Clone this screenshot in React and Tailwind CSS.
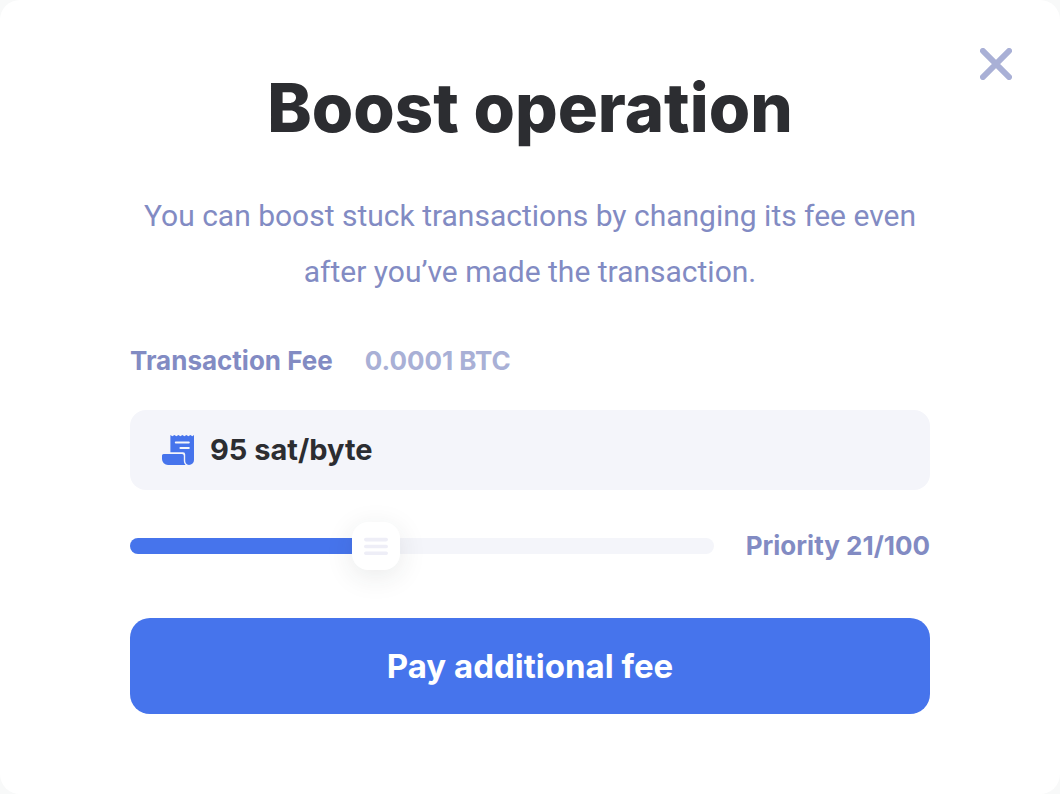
import React, { useState } from 'react';

const THUMB_SIZE = 48;

const CloseIcon = () => (
  <svg viewBox="0 0 32 32" className="size-8" fill="none" stroke="currentColor" strokeWidth="5.8" strokeLinecap="round">
    <path d="M2.9 2.9 29.1 29.1M29.1 2.9 2.9 29.1" />
  </svg>
);

const ReceiptIcon = () => (
  <svg viewBox="0 0 32 30" className="w-8" fill="currentColor">
    <path d="M8.4 0 10.4 1.3 12.4 0 14.4 1.3 16.4 0 18.4 1.3 20.4 0 22.4 1.3 24.4 0 26.4 1.3 28.4 0 30.4 1.3 32 0V25a5 5 0 0 1-5 5 4.6 4.6 0 0 1-3.8-4.8V19.5a2.2 2.2 0 0 0-2.2-2.2H8.4Z" />
    <path d="M0 20.6A1.6 1.6 0 0 1 1.6 19H20a1.8 1.8 0 0 1 1.8 1.8v4.4c0 2 .6 3.6 1.8 4.8H6a6 6 0 0 1-6-6Z" />
    <path d="M13.8 7.6H26.8M18.4 13H26.8" stroke="#f4f5fa" strokeWidth="2" strokeLinecap="round" />
  </svg>
);

const PrioritySlider = ({ value, onChange }) => {
  const offset = `calc((100% - ${THUMB_SIZE}px) * ${value / 100})`;

  return (
    <div className="relative flex h-12 flex-1 items-center">
      <div className="h-4 w-full overflow-hidden rounded-full bg-[#f4f5fa]">
        <div className="h-full bg-[#4674ec]" style={{ width: `calc(${offset} + ${THUMB_SIZE / 2}px)` }} />
      </div>
      <input
        id="priority"
        type="range"
        min="0"
        max="100"
        step="0.1"
        value={value}
        onChange={(e) => onChange(Number(e.target.value))}
        className="absolute inset-0 h-12 w-full cursor-pointer appearance-none bg-transparent [&::-webkit-slider-thumb]:size-12 [&::-webkit-slider-thumb]:appearance-none [&::-webkit-slider-thumb]:rounded-2xl [&::-webkit-slider-thumb]:bg-white [&::-webkit-slider-thumb]:shadow-[0_6px_28px_rgba(44,45,49,0.1)]"
      />
      <svg
        viewBox="0 0 48 48"
        className="pointer-events-none absolute size-12"
        style={{ left: offset }}
        stroke="#eeeef7"
        strokeWidth="3.6"
        strokeLinecap="round"
      >
        <path d="M13.8 17.6H34.2M13.8 24.5H34.2M13.8 31.2H34.2" />
      </svg>
    </div>
  );
};

const App = () => {
  const [fee, setFee] = useState('95 sat/byte');
  const [position, setPosition] = useState(41.4);

  const priority = Math.round(position / 2);

  return (
    <div className="min-h-screen bg-[#f8f9f9] font-['Inter',sans-serif]">
      <main className="relative min-h-screen rounded-[20px] bg-white px-6 pt-16 pb-20">
        <button type="button" aria-label="Close" className="absolute top-12 right-12 cursor-pointer text-[#a9b0d6]">
          <CloseIcon />
        </button>

        <form className="mx-auto max-w-[800px]" onSubmit={(e) => e.preventDefault()}>
          <h1 className="text-center text-[67px] leading-[88px] font-extrabold text-[#2c2d31]">Boost operation</h1>
          <p className="mt-9 text-center font-['Roboto',sans-serif] text-[30px] leading-14 text-[#828bc3]">
            You can boost stuck transactions by changing its fee even after you’ve made the transaction.
          </p>

          <div className="mt-10 flex items-center gap-8 text-[26px] leading-[42px] font-bold">
            <label htmlFor="fee" className="text-[#828bc3]">Transaction Fee</label>
            <span className="text-[#a9b0d6]">0.0001 BTC</span>
          </div>

          <div className="mt-7 flex h-20 items-center gap-4 rounded-2xl bg-[#f4f5fa] px-8 text-[#4674ec]">
            <ReceiptIcon />
            <input
              id="fee"
              type="text"
              value={fee}
              onChange={(e) => setFee(e.target.value)}
              className="min-w-0 flex-1 bg-transparent text-[29px] leading-10 font-bold text-[#2c2d31] outline-none"
            />
          </div>

          <div className="mt-8 flex items-center gap-8">
            <PrioritySlider value={position} onChange={setPosition} />
            <label htmlFor="priority" className="text-[26px] leading-10 font-bold text-[#828bc3]">
              Priority {priority}/100
            </label>
          </div>

          <button type="submit" className="mt-12 h-24 w-full cursor-pointer rounded-[20px] bg-[#4674ec] text-[33px] leading-10 font-bold text-white">
            Pay additional fee
          </button>
        </form>
      </main>
    </div>
  );
};

export default App;
